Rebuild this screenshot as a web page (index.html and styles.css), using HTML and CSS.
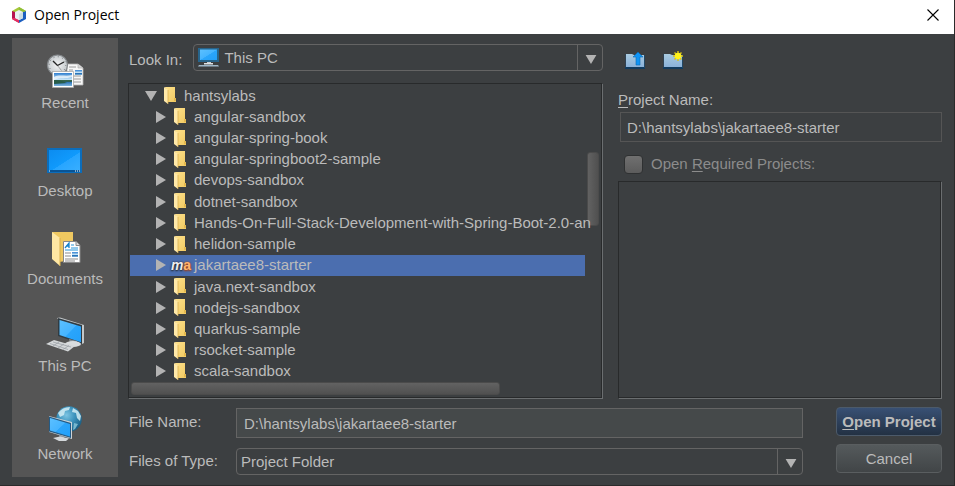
FILE: index.html
```html
<!DOCTYPE html>
<html lang="en">
<head>
<meta charset="utf-8">
<title>Open Project</title>
<link rel="stylesheet" href="styles.css">
</head>
<body>
<svg class="defs" aria-hidden="true">
  <defs>
    <linearGradient id="screen" x1="0" y1="0" x2="1" y2="1">
      <stop offset="0" stop-color="#5cc0ff"/><stop offset=".5" stop-color="#45b4ff"/><stop offset=".52" stop-color="#2aa5fb"/><stop offset="1" stop-color="#22a0fa"/>
    </linearGradient>
    <linearGradient id="desk" x1="0" y1="0" x2="1" y2="1">
      <stop offset="0" stop-color="#0c8cf0"/><stop offset=".55" stop-color="#109afc"/><stop offset=".56" stop-color="#27a5ff"/><stop offset="1" stop-color="#38aeff"/>
    </linearGradient>
    <linearGradient id="gold" x1="0" y1="0" x2="1" y2="1">
      <stop offset="0" stop-color="#fde18c"/><stop offset="1" stop-color="#f2ca62"/>
    </linearGradient>
    <linearGradient id="bluefolder" x1="0" y1="0" x2="0" y2="1">
      <stop offset="0" stop-color="#a9cbe0"/><stop offset="1" stop-color="#86aed8"/>
    </linearGradient>
    <linearGradient id="photo" x1="0" y1="0" x2="0" y2="1">
      <stop offset="0" stop-color="#2f7fd0"/><stop offset=".5" stop-color="#c3e2f5"/><stop offset=".52" stop-color="#3c6b45"/><stop offset=".66" stop-color="#2f6058"/><stop offset=".7" stop-color="#2b73b8"/><stop offset="1" stop-color="#7fb5dc"/>
    </linearGradient>
    <radialGradient id="globe" cx=".4" cy=".35" r=".65">
      <stop offset="0" stop-color="#7cc4e2"/><stop offset=".5" stop-color="#3d93bd"/><stop offset="1" stop-color="#1c6288"/>
    </radialGradient>
    <radialGradient id="dial"><stop offset="0" stop-color="#f3f4f5"/><stop offset="1" stop-color="#c5cacd"/></radialGradient>
    <symbol id="folder" viewBox="0 0 12 17">
      <path d="M1 0h10v13l1 1v1H4z" fill="url(#gold)"/>
      <path d="M0 0l4 3v14l-4-3z" fill="#ffe9a9"/>
      <path d="M4 3v14" stroke="#d5ab45" stroke-width=".7"/>
      <path d="M10 11h2v3h-2z" fill="#e3b84f"/>
    </symbol>
    <symbol id="right" viewBox="0 0 10 12"><path d="M0 0l10 6-10 6z" fill="#b3b3b3"/></symbol>
    <symbol id="down" viewBox="0 0 12 10"><path d="M0 0h12L6 10z" fill="#b3b3b3"/></symbol>
  </defs>
</svg>

<header class="titlebar">
  <svg class="logo" viewBox="0 0 14 16" aria-hidden="true">
    <path d="M7 0L0 4v3l3-1 4-2 4 2 3-1V4z" fill="#a6c83a"/>
    <path d="M0 4v8l7 4v-3l-4-2V5z" fill="#b5134f"/>
    <path d="M0 11v1l7 4v-3l-4-2z" fill="#e52e60"/>
    <path d="M14 4v8l-7 4v-3l4-2V5z" fill="#1c5fc0"/>
    <path d="M14 4L7 0v3l4 2z" fill="#8fbf35"/>
    <path d="M7 3l4 2v6l-4 2-4-2V5z" fill="#e8f0f1"/>
    <path d="M7 7l4-2v6l-4 2z" fill="#cbdde2"/>
  </svg>
  <h1 class="title">Open Project</h1>
  <button class="close" type="button" aria-label="Close">
    <svg viewBox="0 0 12 12" aria-hidden="true"><path d="M.5 .5l11 11M11.500 .5l-11 11" stroke="#000" stroke-width="1.100"/></svg>
  </button>
</header>

<main class="dialog">
  <nav class="places" aria-label="Places">
    <button class="place" type="button">
      <svg viewBox="0 0 36 36" aria-hidden="true">
        <path d="M20 11h11l5 4v17H20z" fill="#f7f7f7" stroke="#b5b5b5" stroke-width=".8"/>
        <path d="M31 11v4h5" fill="#d8d8d8" stroke="#aaa" stroke-width=".6"/>
        <path d="M22 14h7M22 17h4M22 20h4M22 23h12M22 26h12M22 29h12" stroke="#9a9a9a"/>
        <path d="M28 17h7v5h-7z" fill="url(#photo)"/>
        <circle cx="10.500" cy="12" r="10" fill="url(#dial)" stroke="#85898c" stroke-width="1.200"/>
        <circle cx="10.500" cy="12" r="8.300" fill="none" stroke="#73777a" stroke-dasharray="1 3.350"/>
        <path d="M6 8l4.500 4.500L17 9" fill="none" stroke="#222" stroke-width="1.400"/>
        <path d="M10.500 12.500l4 5" stroke="#777" stroke-width=".6"/>
        <path d="M5.500 18.500h21v16h-21z" fill="#fff" stroke="#a8a8a8" stroke-width=".8"/>
        <path d="M7 20h18v13H7z" fill="url(#photo)"/>
        <path d="M7 24c5-3 12 0 18-2v2c-6 2-11 0-18 3z" fill="#f0f8fb" opacity=".8"/>
        <path d="M7 27c5 0 9 1 13 3l-13 1z" fill="#285c48"/>
      </svg>
      <span>Recent</span>
    </button>
    <button class="place" type="button">
      <svg viewBox="0 0 36 36" aria-hidden="true">
        <path d="M0 7h35v25H0z" fill="#0b6dbb"/>
        <path d="M2 9h31v20H2z" fill="url(#desk)"/>
        <path d="M2 30h31" stroke="#073d70"/>
        <path d="M2 30h1M28 30h1M30 30h1M32 30h1" stroke="#fff"/>
      </svg>
      <span>Desktop</span>
    </button>
    <button class="place" type="button">
      <svg viewBox="0 0 36 36" aria-hidden="true">
        <path d="M5 3h21v28l-14 2z" fill="#efc860"/>
        <path d="M5 3l8 6v28l-8-7z" fill="#ffe7a3"/>
        <path d="M13 9v28" stroke="#d9af4c"/>
        <path d="M16.500 12.500H29l4 4v17H16.500z" fill="#fff" stroke="#888"/>
        <path d="M29 12.500v4h4" fill="#ddd" stroke="#888"/>
        <path d="M18 19l4-5v5M19 17h3" fill="none" stroke="#1684cc" stroke-width="1.300"/>
        <path d="M24 16h3M24 19h7M18 21h13" stroke="#2795d8"/>
        <path d="M18 24h6M18 27h6M18 30h13M18 32h10" stroke="#8b8b8b"/>
        <path d="M25 23h6v5h-6z" fill="url(#photo)"/>
      </svg>
      <span>Documents</span>
    </button>
    <button class="place" type="button">
      <svg viewBox="0 0 36 36" aria-hidden="true">
        <path d="M10 2l3-.5L37 9v18l-2 1z" fill="#c4c8ca"/>
        <path d="M11 2l24 7v19L11 20z" fill="#303b42"/>
        <path d="M12.500 4L34 10.500v15.800L12.500 19z" fill="url(#screen)"/>
        <path d="M22 23l8 2-1 3-6-1z" fill="#899096"/>
        <ellipse cx="26" cy="28" rx="8" ry="3" fill="#d9dcde"/>
        <path d="M-1 28l8-4 21 6-7 5.500z" fill="#d4d7d9"/>
        <path d="M3 27.500l18 6M6 26l18 5M6 30l6-4M11 32l6-4M16 33.500l6-4" stroke="#959ba0" stroke-width=".7"/>
      </svg>
      <span>This PC</span>
    </button>
    <button class="place" type="button">
      <svg viewBox="0 0 36 36" aria-hidden="true">
        <circle cx="22" cy="15" r="12.800" fill="url(#globe)"/>
        <path d="M11 9c3-4 7-6 12-6l-1 3-4 1-1 4-4 2zM26 4l5 3 3 5-1 5-3-3-1-5-4-1z" fill="#d4edf5" opacity=".85"/>
        <path d="M27 19l4 1-3 5-2 1z" fill="#77b7ce"/>
        <path d="M2 12l23 6v17L2 28z" fill="#ced4d8"/>
        <path d="M2 12.500l22 6.500v15L2 27.500z" fill="#245b85"/>
        <path d="M3 14l20 6v12.500L3 26.500z" fill="url(#screen)"/>
        <path d="M12 31l5 1v3h-4z" fill="#9299a0"/>
        <path d="M6 34l7-1.500 9 2-3 2.500h-7z" fill="#d4d8db"/>
      </svg>
      <span>Network</span>
    </button>
  </nav>

  <div class="content">
    <div class="upper">
      <section class="browser">
        <div class="lookin">
          <label for="look">Look In:</label>
          <div class="combo with-icon">
            <svg class="pc" viewBox="0 0 22 19" aria-hidden="true">
              <path d="M0 0h21v14H0z" fill="#27658c"/><path d="M2 1.500h17V12H2z" fill="url(#screen)"/>
              <path d="M9 14h4v2H9z" fill="#c5ccd1"/><path d="M6 15h9v1.500H6z" fill="#dfe3e5"/><path d="M1 17h19l1 1.500H0z" fill="#9fb8c9"/>
            </svg>
            <select id="look"><option>This PC</option></select>
            <svg class="arrow" aria-hidden="true"><use href="#down"/></svg>
          </div>
        </div>
        <div class="treepane">
          <ul class="tree" role="tree">
            <li class="root"><svg class="open"><use href="#down"/></svg><svg class="dir"><use href="#folder"/></svg>hantsylabs</li>
            <li><svg class="shut"><use href="#right"/></svg><svg class="dir"><use href="#folder"/></svg>angular-sandbox</li>
            <li><svg class="shut"><use href="#right"/></svg><svg class="dir"><use href="#folder"/></svg>angular-spring-book</li>
            <li><svg class="shut"><use href="#right"/></svg><svg class="dir"><use href="#folder"/></svg>angular-springboot2-sample</li>
            <li><svg class="shut"><use href="#right"/></svg><svg class="dir"><use href="#folder"/></svg>devops-sandbox</li>
            <li><svg class="shut"><use href="#right"/></svg><svg class="dir"><use href="#folder"/></svg>dotnet-sandbox</li>
            <li><svg class="shut"><use href="#right"/></svg><svg class="dir"><use href="#folder"/></svg>Hands-On-Full-Stack-Development-with-Spring-Boot-2.0-an</li>
            <li><svg class="shut"><use href="#right"/></svg><svg class="dir"><use href="#folder"/></svg>helidon-sample</li>
            <li class="selected"><svg class="shut"><use href="#right"/></svg><span class="maven" aria-hidden="true"><i>m</i><b>a</b></span>jakartaee8-starter</li>
            <li><svg class="shut"><use href="#right"/></svg><svg class="dir"><use href="#folder"/></svg>java.next-sandbox</li>
            <li><svg class="shut"><use href="#right"/></svg><svg class="dir"><use href="#folder"/></svg>nodejs-sandbox</li>
            <li><svg class="shut"><use href="#right"/></svg><svg class="dir"><use href="#folder"/></svg>quarkus-sample</li>
            <li><svg class="shut"><use href="#right"/></svg><svg class="dir"><use href="#folder"/></svg>rsocket-sample</li>
            <li><svg class="shut"><use href="#right"/></svg><svg class="dir"><use href="#folder"/></svg>scala-sandbox</li>
          </ul>
          <div class="vbar"><div class="thumb"></div></div>
          <div class="hbar"><div class="thumb"></div></div>
        </div>
      </section>

      <section class="details">
        <div class="tools">
          <button type="button" aria-label="Up One Level">
            <svg viewBox="0 0 20 20" aria-hidden="true">
              <path d="M1 4h6l2 1h10v14H1z" fill="url(#bluefolder)"/><path d="M0 17h20v2H0z" fill="#123b5e"/><path d="M0 4v14M19.500 5v13" stroke="#1c4a70" stroke-width=".8"/>
              <path d="M13 2l5 5h-3v8h-4V7H8z" fill="#0f94f5" stroke="#0b68b2" stroke-width=".6"/>
            </svg>
          </button>
          <button type="button" aria-label="Create New Folder">
            <svg viewBox="0 0 20 20" aria-hidden="true">
              <path d="M1 4h6l2 1h10v14H1z" fill="url(#bluefolder)"/><path d="M0 17h20v2H0z" fill="#123b5e"/><path d="M0 4v14M19.500 5v13" stroke="#1c4a70" stroke-width=".8"/>
              <path d="M15 1v10M10 6h10M11.500 2.500l7 7M18.500 2.500l-7 7" stroke="#d5bd18" stroke-width="1.500"/><circle cx="15" cy="6" r="3.200" fill="#fff21a"/>
            </svg>
          </button>
        </div>
        <label class="name-label" for="pname"><u>P</u>roject Name:</label>
        <input class="pname" id="pname" type="text" value="D:\hantsylabs\jakartaee8-starter" readonly>
        <div class="required">
          <input id="req" type="checkbox" disabled>
          <label for="req">Open <u>R</u>equired Projects:</label>
        </div>
        <div class="reqlist"></div>
      </section>
    </div>

    <form class="lower">
      <div class="fields">
        <label for="fname">File Name:</label>
        <input class="fname" id="fname" type="text" value="D:\hantsylabs\jakartaee8-starter">
        <label for="ftype">Files of Type:</label>
        <div class="combo">
          <select id="ftype"><option>Project Folder</option></select>
          <svg class="arrow" aria-hidden="true"><use href="#down"/></svg>
        </div>
      </div>
      <div class="actions">
        <button class="primary" type="button"><u>O</u>pen Project</button>
        <button type="button">Cancel</button>
      </div>
    </form>
  </div>
</main>
</body>
</html>
```
FILE: styles.css
```css
* { box-sizing: border-box; }

body {
  margin: 0;
  min-height: 100vh;
  display: flex;
  flex-direction: column;
  background: #3c3f41;
  color: #bbb;
  font: 15px/20px "Liberation Sans", Arial, sans-serif;
}

button, input, select { font: inherit; color: inherit; margin: 0; }
svg { display: block; flex: none; }
u { text-underline-offset: 2px; text-decoration-thickness: 1px; }
.defs { position: absolute; width: 0; height: 0; }

.titlebar {
  display: flex;
  align-items: center;
  height: 34px;
  padding: 0 15px 4px 12px;
  background: #fff;
  color: #000;
  border-right: 1px solid #2b2b2b;
}
.logo { width: 14px; height: 16px; }
.title { margin: 0 auto 0 8px; font: 14px/20px "Open Sans", "Segoe UI", sans-serif; }
.close { padding: 0; border: 0; background: none; }
.close svg { width: 12px; height: 12px; }

.dialog {
  flex: 1;
  display: flex;
  gap: 10px;
  padding: 4px 12px 8px;
  border: solid #2b2b2b;
  border-width: 0 1px 1px 0;
}

.places {
  flex: none;
  width: 106px;
  display: flex;
  flex-direction: column;
  background: #555;
}
.place {
  flex: 1;
  display: flex;
  flex-direction: column;
  align-items: center;
  gap: 4px;
  padding: 15px 0 0;
  border: 0;
  background: none;
}
.place svg { width: 36px; height: 36px; overflow: visible; }

.content { flex: 1; min-width: 0; display: flex; flex-direction: column; gap: 9px; padding: 6px 0 2px; }
.upper { flex: 1; display: flex; gap: 15px; }
.browser { flex: 1; min-width: 0; display: flex; flex-direction: column; gap: 12px; }
.lookin { display: flex; align-items: center; gap: 11px; padding-left: 1px; }
.lookin label { padding-top: 4px; }

.combo { flex: 1; position: relative; }
.combo select {
  appearance: none;
  display: block;
  width: 100%;
  height: 27px;
  padding: 0 32px 0 4px;
  border: 1px solid #646464;
  border-radius: 4px;
  background: linear-gradient(#646464, #646464) right 24px top / 1px 100% no-repeat #3c3f41;
}
.combo.with-icon select { padding-left: 30px; }
.combo .arrow { position: absolute; right: 6px; top: 11px; width: 12px; height: 9px; pointer-events: none; }
.combo .pc { position: absolute; left: 5px; top: 4px; width: 22px; height: 19px; pointer-events: none; }

.treepane, .reqlist {
  border: 1px solid #282a2b;
  box-shadow: 1px 1px #6b6e70;
}
.treepane {
  flex: 1;
  display: grid;
  grid-template: 1fr 13px / 1fr 12px;
  padding: 1px 2px 2px 1px;
  margin-right: 1px;
}
.tree {
  position: relative;
  z-index: 1;
  display: flex;
  flex-direction: column;
  min-width: 0;
  margin: 0 2px 0 0;
  padding: 0;
  list-style: none;
}
.tree li {
  flex: 1;
  display: flex;
  align-items: center;
  padding-left: 26px;
  white-space: nowrap;
}
.tree .root { padding-left: 15px; }
.tree .selected { background: #4b6eaf; }
.shut { width: 10px; height: 12px; margin-right: 8px; }
.open { width: 12px; height: 10px; margin-right: 7px; }
.dir { width: 12px; height: 17px; margin-right: 8px; }
.maven {
  display: flex;
  justify-content: center;
  width: 20px;
  margin: 0 3px 0 -3px;
  font-size: 14px;
  font-weight: bold;
  text-shadow: 0 0 2px #222, 0 1px 2px #222;
  color: #eee;
}
.maven b { color: #ffb46e; text-shadow: 0 0 2px #a33f10, 0 1px 2px #a33f10; }
.thumb { border: 1px solid #4b4b4b; border-radius: 3px; }
.vbar .thumb { height: 25%; margin-top: 67px; background: linear-gradient(90deg, #626262, #505050); }
.hbar { padding-left: 1px; }
.hbar .thumb { height: 13px; width: 81%; background: linear-gradient(#626262, #505050); }

.details { flex: none; width: 40%; max-width: 324px; display: flex; flex-direction: column; }
.tools { display: flex; gap: 18px; padding: 6px 0 0 7px; }
.tools button { padding: 0; border: 0; background: none; }
.tools svg { width: 20px; height: 20px; }
.name-label { margin-top: 20px; }
.pname, .fname { min-width: 0; padding: 0 6px; height: 30px; border-radius: 0; outline: 0; }
.pname { margin: 2px 0 0 2px; border: 1px solid #555; background: #3c3f41; }
.required { display: flex; align-items: center; gap: 8px; margin: 12px 0 7px 6px; color: #8c8c8c; }
.required input {
  appearance: none;
  width: 19px;
  height: 19px;
  border: 1px solid #2f3132;
  border-radius: 4px;
  background: linear-gradient(#707070, #5c5c5c);
}
.reqlist { flex: 1; margin-right: 1px; }

.lower { display: flex; gap: 33px; }
.fields {
  flex: 1;
  display: grid;
  grid-template-columns: 100px 1fr;
  gap: 10px 7px;
  align-items: center;
  padding: 1px 0 0 1px;
}
.fields label { padding-bottom: 2px; }
.fname { border: 1px solid #646464; background: #45494a; padding-left: 7px; }
.actions { width: 106px; display: flex; flex-direction: column; gap: 8px; }
.actions button {
  height: 29px;
  padding: 0;
  border: 1px solid #5a5e60;
  border-radius: 4px;
  background: linear-gradient(#555a5c, #414547);
}
.actions .primary {
  background: linear-gradient(#385074, #233143);
  border-color: #4c5a6a;
  font-weight: bold;
}
```
